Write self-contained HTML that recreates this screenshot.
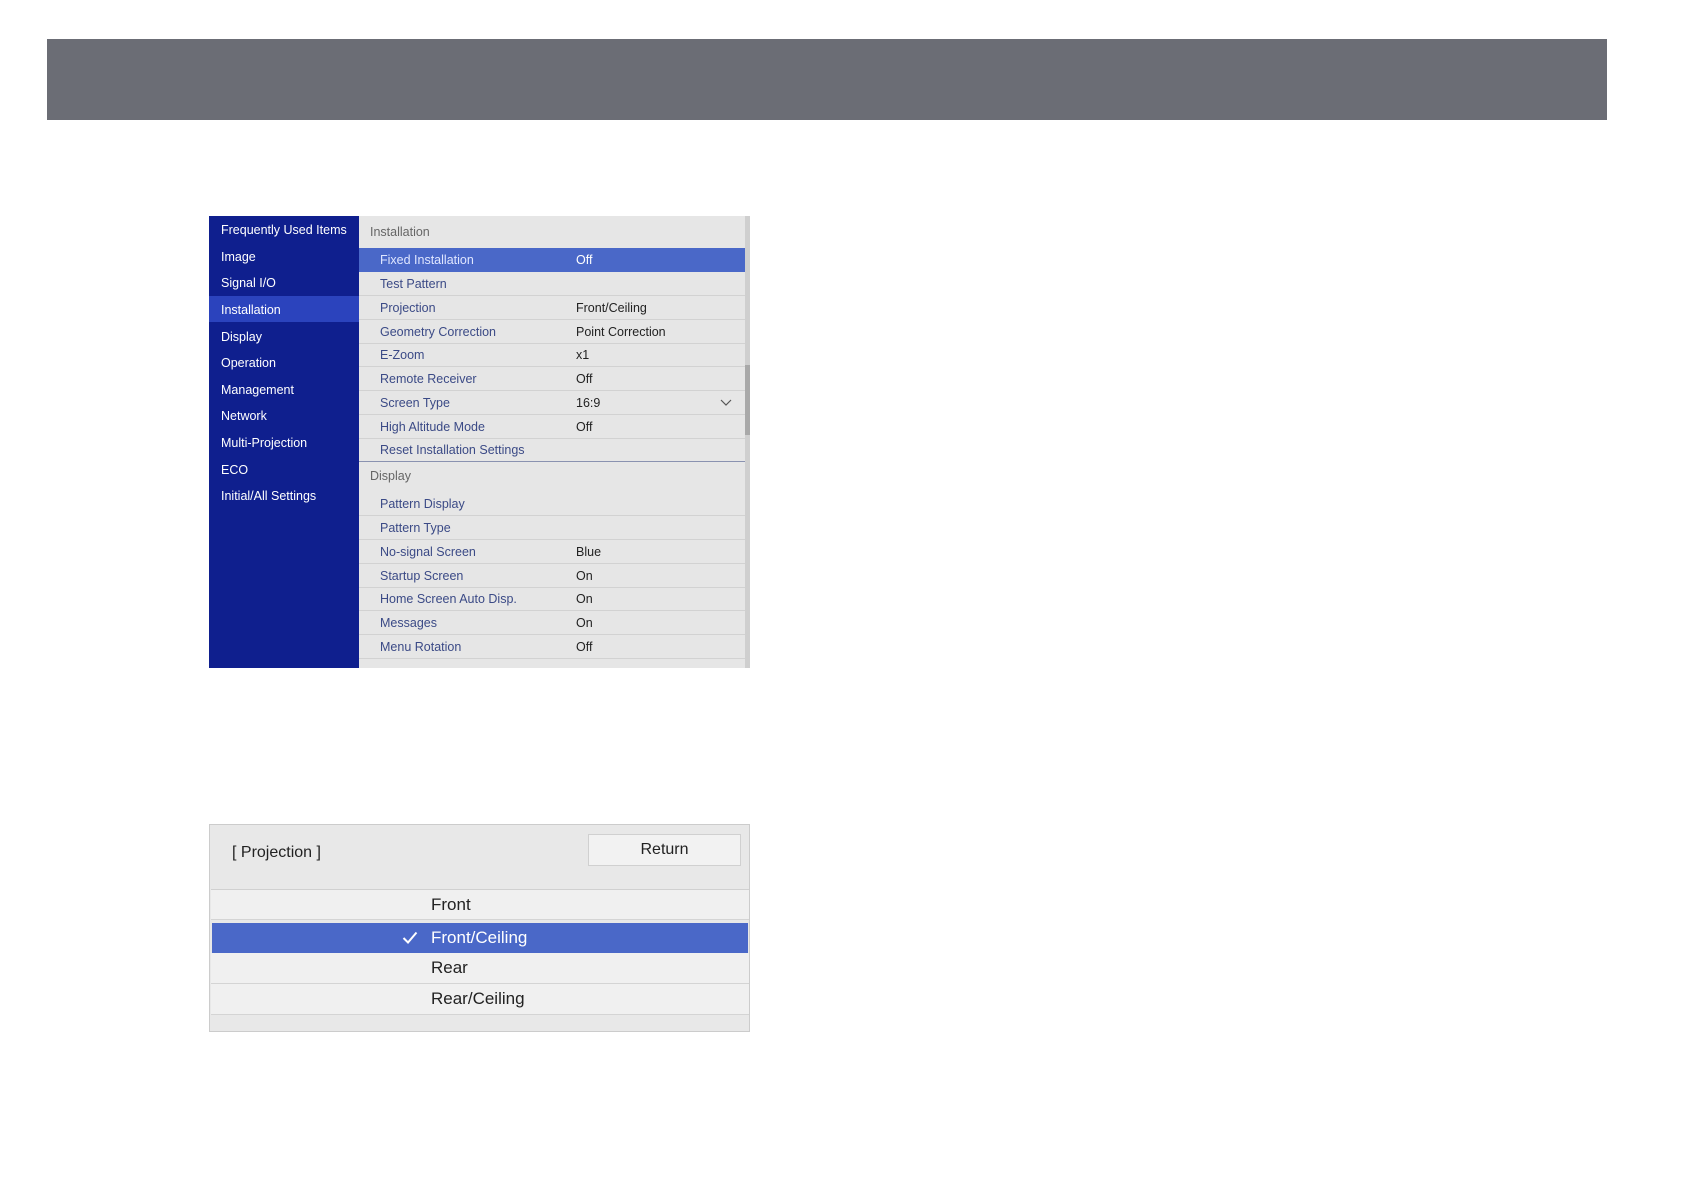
<!DOCTYPE html>
<html><head><meta charset="utf-8"><style>
*{margin:0;padding:0;box-sizing:border-box}
body{width:1684px;height:1190px;background:#fff;position:relative;font-family:"Liberation Sans",sans-serif;overflow:hidden}
.a{position:absolute}
.side{left:209px;top:216px;width:150px;height:452px;background:#0f1f8e}
.si{position:absolute;left:12px;color:#fff;font-size:12.5px;transform:translateY(-50%)}
.main{left:359px;top:216px;width:391px;height:452px;background:#e6e6e6;overflow:hidden}
.row{position:absolute;left:0;width:386px;height:24px;border-bottom:1px solid #d2d2d2;font-size:12.5px;color:#3b4a86}
.row span{position:absolute;top:50%;transform:translateY(-50%)}
.row .l{left:21px}.row .v{left:217px;color:#222}
.sec{position:absolute;left:11px;font-size:12.5px;color:#666;transform:translateY(-50%)}
.dlg{left:209px;top:824px;width:541px;height:208px;background:#e8e8e8;border:1px solid #ccc}
.opt{position:absolute;left:1px;width:538px;height:31px;background:#f0f0f0;border-bottom:1px solid #d4d4d4;font-size:17px;color:#222}
.opt span{position:absolute;left:220px;top:50%;transform:translateY(-50%)}
</style></head><body>
<div class="a" style="left:47px;top:39px;width:1560px;height:81px;background:#6b6d75"></div>

<div class="a side">
<div class="a" style="left:0;top:80px;width:150px;height:26px;background:#2b43bd"></div>
<div class="si" style="top:14px">Frequently Used Items</div>
<div class="si" style="top:41px">Image</div>
<div class="si" style="top:67px">Signal I/O</div>
<div class="si" style="top:94px">Installation</div>
<div class="si" style="top:121px">Display</div>
<div class="si" style="top:147px">Operation</div>
<div class="si" style="top:174px">Management</div>
<div class="si" style="top:200px">Network</div>
<div class="si" style="top:227px">Multi-Projection</div>
<div class="si" style="top:254px">ECO</div>
<div class="si" style="top:280px">Initial/All Settings</div>
</div>

<div class="a main">
<div class="sec" style="top:16px">Installation</div>
<div class="row" style="top:32px;background:#4a68c8;border:none;color:#dfe6ff"><span class="l">Fixed Installation</span><span class="v" style="color:#fff">Off</span></div>
<div class="row" style="top:56px"><span class="l">Test Pattern</span></div>
<div class="row" style="top:80px"><span class="l">Projection</span><span class="v">Front/Ceiling</span></div>
<div class="row" style="top:104px"><span class="l">Geometry Correction</span><span class="v">Point Correction</span></div>
<div class="row" style="top:127px"><span class="l">E-Zoom</span><span class="v">x1</span></div>
<div class="row" style="top:151px"><span class="l">Remote Receiver</span><span class="v">Off</span></div>
<div class="row" style="top:175px"><span class="l">Screen Type</span><span class="v">16:9</span>
<svg style="position:absolute;left:361px;top:8px" width="12" height="8" viewBox="0 0 12 8"><path d="M1 1L6 6L11 1" fill="none" stroke="#555" stroke-width="1.2"/></svg></div>
<div class="row" style="top:199px"><span class="l">High Altitude Mode</span><span class="v">Off</span></div>
<div class="row" style="top:222px;border-bottom:1px solid #8a92b0"><span class="l">Reset Installation Settings</span></div>
<div class="sec" style="top:260px">Display</div>
<div class="row" style="top:276px"><span class="l">Pattern Display</span></div>
<div class="row" style="top:300px"><span class="l">Pattern Type</span></div>
<div class="row" style="top:324px"><span class="l">No-signal Screen</span><span class="v">Blue</span></div>
<div class="row" style="top:348px"><span class="l">Startup Screen</span><span class="v">On</span></div>
<div class="row" style="top:371px"><span class="l">Home Screen Auto Disp.</span><span class="v">On</span></div>
<div class="row" style="top:395px"><span class="l">Messages</span><span class="v">On</span></div>
<div class="row" style="top:419px"><span class="l">Menu Rotation</span><span class="v">Off</span></div>
<div class="row" style="top:443px"><span class="l" style="top:16px">Split Screen Settings</span></div>
<div class="a" style="left:386px;top:0;width:5px;height:452px;background:#cfcfcf"></div>
<div class="a" style="left:386px;top:149px;width:5px;height:70px;background:#a9a9a9"></div>
</div>

<div class="a dlg">
<div class="a" style="left:22px;top:28px;font-size:16px;color:#222;transform:translateY(-50%)">[ Projection ]</div>
<div class="a" style="left:378px;top:9px;width:153px;height:32px;background:#f2f2f2;border:1px solid #d0d0d0;font-size:16px;color:#222;text-align:center;line-height:30px">Return</div>
<div class="opt" style="top:64px;border-top:1px solid #d0d0d0"><span>Front</span></div>
<div class="opt" style="top:98px;height:30px;background:#4a68c8;color:#fff;border:none;left:2px;width:536px"><svg style="position:absolute;left:190px;top:8px" width="16" height="13" viewBox="0 0 16 13"><path d="M1.5 7L6 11.5L14.5 1.5" fill="none" stroke="#fff" stroke-width="2"/></svg><span style="left:219px">Front/Ceiling</span></div>
<div class="opt" style="top:128px"><span>Rear</span></div>
<div class="opt" style="top:159px"><span>Rear/Ceiling</span></div>
</div>
</body></html>
